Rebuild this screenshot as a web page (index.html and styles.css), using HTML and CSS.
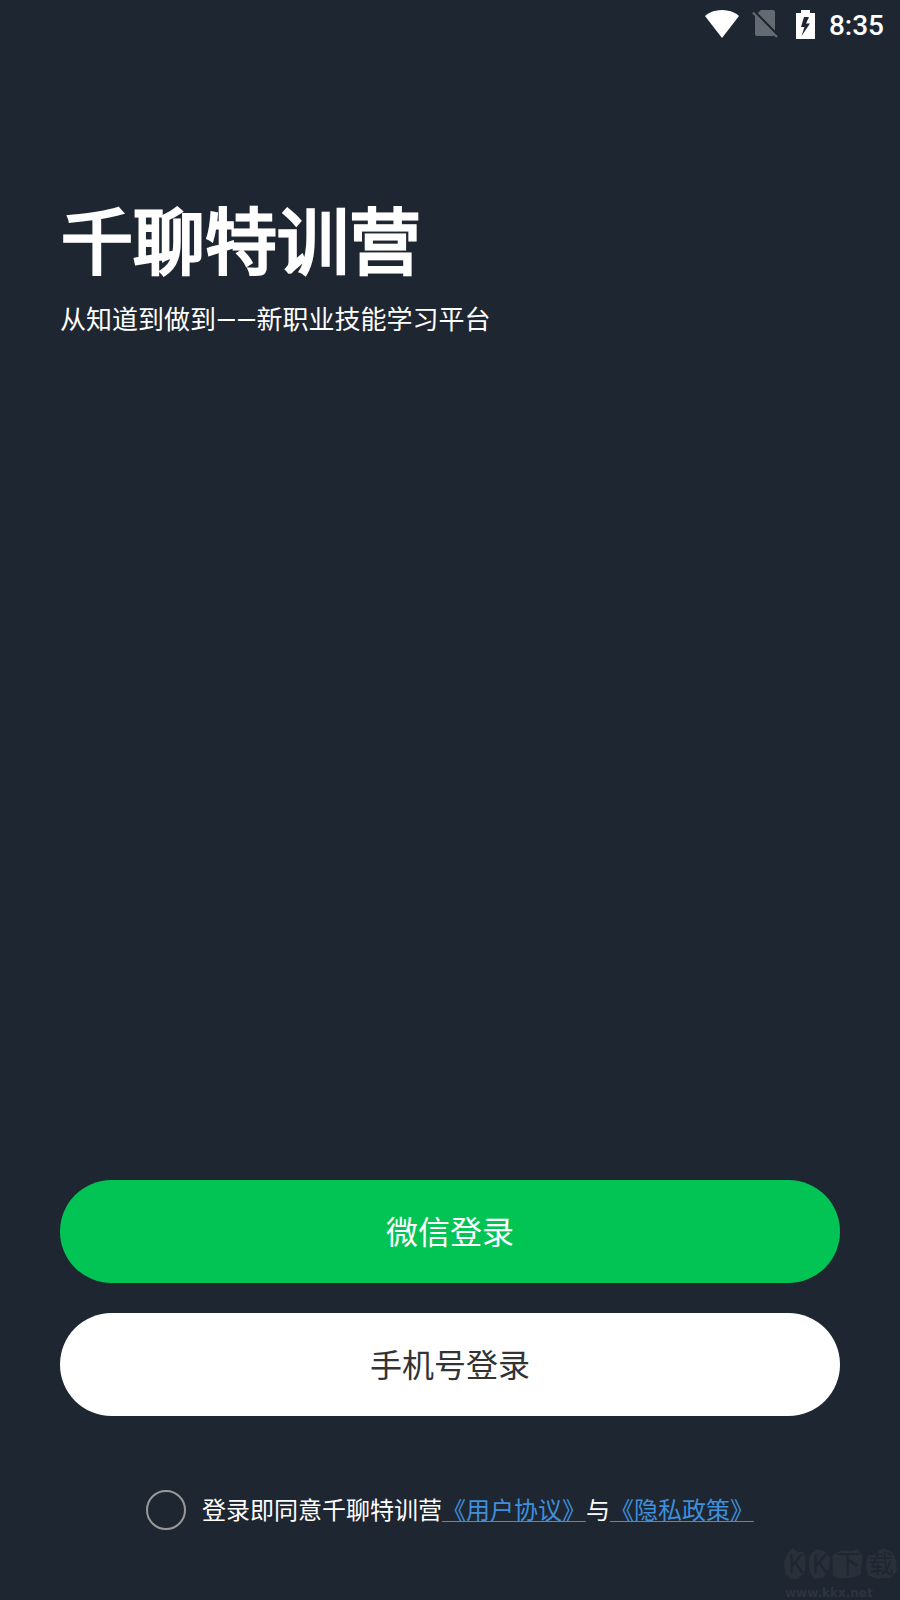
FILE: index.html
```html
<!DOCTYPE html>
<html lang="zh-CN">
<head>
<meta charset="utf-8">
<meta name="viewport" content="width=device-width, initial-scale=1">
<title>千聊特训营</title>
<link rel="stylesheet" href="styles.css">
</head>
<body>
<div class="screen">
  <div class="status-bar">
    <svg class="icon-wifi" viewBox="0 0 34 28" aria-hidden="true"><path d="M17 28 0 6C2 4 8 0 17 0S32 4 34 6Z" fill="#fff"/></svg>
    <svg class="icon-sim" viewBox="0 0 26 28" aria-hidden="true"><path d="M9 0H21Q23 0 23 2V21L5 3.500ZM3 5 23 25Q22 26 21 26H5Q3 26 3 24Z" fill="#646a72"/><path d="M1 2.500 25 27" stroke="#646a72" stroke-width="2.400" fill="none"/><path d="M3 1.500 25 24" stroke="#1e2631" stroke-width="1.800" fill="none"/></svg>
    <svg class="icon-battery" viewBox="0 0 19 29" aria-hidden="true"><path fill-rule="evenodd" d="M5 0H14V3H19V29H0V3H5ZM8 7 5 17H8.500L5.500 26 14 13.500H10L13 7Z" fill="#fff"/></svg>
    <time class="clock">8:35</time>
  </div>
  <header class="intro">
    <h1 class="title">千聊特训营</h1>
    <p class="subtitle">从知道到做到——新职业技能学习平台</p>
  </header>
  <main class="actions">
    <button class="btn btn-wechat" type="button">微信登录</button>
    <button class="btn btn-phone" type="button">手机号登录</button>
  </main>
  <footer class="agreement">
    <input class="agree-box" type="checkbox" id="agree">
    <div class="agree-text"><label for="agree">登录即同意千聊特训营</label><a class="link" href="#terms">《用户协议》</a>与<a class="link" href="#privacy">《隐私政策》</a></div>
  </footer>
  <div class="watermark">
    <div class="mark-logo">
      <svg class="mark-shapes" viewBox="0 0 116 34" aria-hidden="true"><path d="M4 5 9 0 14 4 20 3 22 12 21 25 14 31 7 31 1 26 0 14ZM28 5 34 1 41 3 47 9 46 20 40 30 30 31 26 23 25 12ZM49 7 58 2 68 3 75 1 80 8 78 27 69 30 57 31 50 28ZM85 8 94 4 101 0 110 4 114 13 115 24 108 30 95 31 86 28 83 18Z" fill="#293039"/></svg>
      <div class="mark-name"><span>K</span><span>K</span><span>下</span><span>载</span></div>
    </div>
    <span class="mark-url">www.kkx.net</span>
  </div>
</div>
</body>
</html>
```
FILE: styles.css
```css
* {
  box-sizing: border-box;
}

body {
  margin: 0;
  background: #1e2631;
  color: #fff;
  font-family: Roboto, "Noto Sans CJK SC", sans-serif;
}

.screen {
  position: relative;
  display: flex;
  flex-direction: column;
  min-height: 100vh;
  padding-bottom: 70px;
}

.status-bar {
  display: flex;
  align-items: center;
  justify-content: flex-end;
  height: 48px;
  padding-right: 16px;
}

.icon-wifi {
  width: 34px;
  height: 28px;
  margin-right: 13px;
}

.icon-sim {
  width: 26px;
  height: 28px;
  margin-right: 18px;
}

.icon-battery {
  width: 19px;
  height: 29px;
  margin-right: 14px;
}

.clock {
  padding-top: 4px;
  font-size: 28px;
  font-weight: 500;
  line-height: 44px;
}

.intro {
  padding: 142px 60px 0;
}

.title {
  margin: 0;
  padding-left: 1px;
  font-size: 72px;
  font-weight: 400;
  line-height: 108px;
  -webkit-text-stroke: 3px #fff;
}

.subtitle {
  margin: 2px 0 0;
  font-size: 26px;
  line-height: 40px;
}

.actions {
  display: flex;
  flex-direction: column;
  gap: 30px;
  margin-top: auto;
  padding: 0 60px;
}

.btn {
  height: 103px;
  padding: 0 0 4px;
  border: 0;
  border-radius: 52px;
  font: inherit;
  font-size: 32px;
}

.btn-wechat {
  background: #02c455;
  color: #fff;
}

.btn-phone {
  background: #fff;
  color: #333;
}

.agreement {
  display: flex;
  align-items: center;
  justify-content: center;
  gap: 16px;
  margin-top: 74px;
  padding: 0 16px;
}

.agree-box {
  flex: none;
  width: 40px;
  height: 40px;
  margin: 0;
  appearance: none;
  border: 2px solid #999;
  border-radius: 50%;
}

.agree-box:checked {
  background: #02c455;
}

.agree-text {
  padding-top: 2px;
  font-size: 24px;
  line-height: 38px;
}

.link {
  color: #3f8fdc;
  text-decoration: underline 1px;
  text-decoration-skip-ink: none;
  text-underline-offset: 2px;
}

.watermark {
  position: absolute;
  right: 0;
  bottom: 0;
  padding-right: 2px;
}

.mark-logo {
  display: grid;
  align-items: center;
  margin-bottom: 4px;
}

.mark-shapes,
.mark-name {
  grid-area: 1 / 1;
}

.mark-shapes {
  width: 114px;
  height: 34px;
}

.mark-name {
  display: grid;
  grid-template-columns: 24px 24px 32px 34px;
  color: #1e2631;
  font-size: 25px;
  font-weight: 400;
  line-height: 32px;
  text-align: center;
}

.mark-url {
  display: block;
  padding-left: 1px;
  color: #2d343e;
  font: 700 12px/14px "DejaVu Sans", sans-serif;
}
```
